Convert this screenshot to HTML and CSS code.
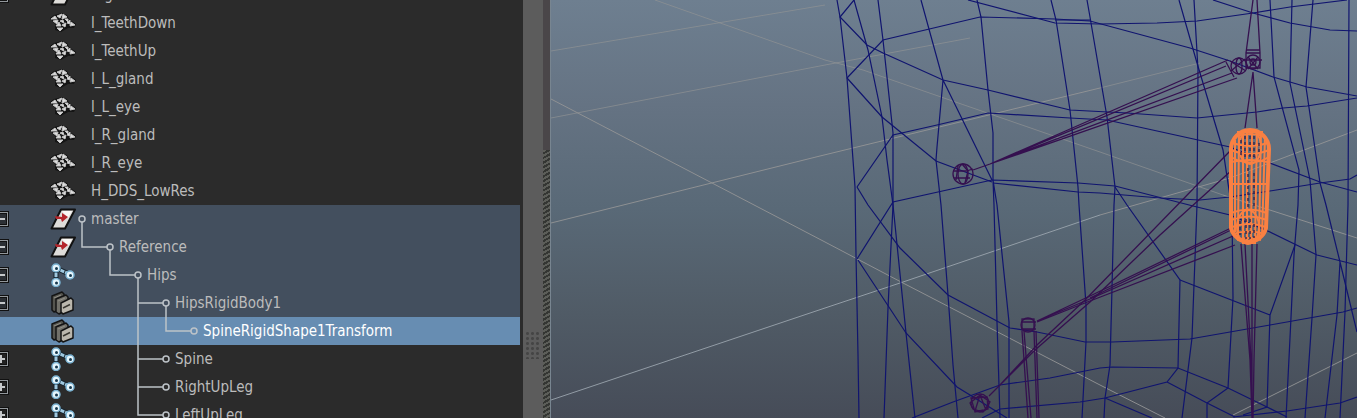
FILE: index.html
```html
<!DOCTYPE html>
<html lang="en">
<head>
<meta charset="utf-8">
<title>Outliner</title>
<link rel="stylesheet" href="styles.css">
</head>
<body>
<svg class="defs" aria-hidden="true">
  <symbol id="mesh" viewBox="0 0 26 24">
    <path d="M0 7 4 4 12 2 17 4 19 8 26 13 24 17 18 17 11 21 5 19 5 13Z" fill="#151515"/>
    <path d="M1 8 5 5 7 8ZM7 5 12 3 10 7ZM13 3 17 6 12 8ZM3 10 8 9 7 13ZM10 10 13 9 14 12ZM15 8 18 8 18 11ZM6 15 9 11 11 15ZM12 14 16 12 15 16ZM17 12 20 9 20 13ZM21 11 25 14 20 15ZM7 17 13 17 10 20Z" fill="#dedede" stroke="#c4c4c4"/>
  </symbol>
  <symbol id="transform" viewBox="0 0 26 24">
    <path d="M11 2.500H25L15 21.500H1.500Z" fill="#dedcd9" stroke="#111" stroke-width="2" stroke-linejoin="round"/>
    <path d="M12 4 22 4 18 11Z" fill="#faf8f6"/>
    <path d="M5 9 12 10 12 6 18 10 12 15 11 12 6 12Z" fill="#b5262c"/>
  </symbol>
  <symbol id="joint" viewBox="0 0 26 24">
    <path d="M6 5 19 11M6 5V19" stroke="#16242e" stroke-width="5"/>
    <path d="M6 5 19 11M6 5V19" stroke="#9fc8df" stroke-width="3" stroke-dasharray="4 1"/>
    <g fill="#e6f6fd" stroke="#79b2d2" stroke-width="1.500"><circle cx="6" cy="5" r="4"/><circle cx="20" cy="12" r="4"/><circle cx="6" cy="19.500" r="4"/></g>
    <g fill="#17374c"><circle cx="6.500" cy="5.500" r="1.500"/><circle cx="20.500" cy="12.500" r="1.500"/><circle cx="6.500" cy="20" r="1.500"/></g>
  </symbol>
  <symbol id="rigid" viewBox="0 0 26 24">
    <g stroke="#141414" stroke-width="1.500" stroke-linejoin="round">
      <path d="M2 5 12 1 14 3V17L4 21 2 19Z" fill="#55554f"/>
      <path d="M6 8 16 4 18 6V18L9 23 6 21Z" fill="#72716a"/>
      <path d="M11 12 13 11 21 7 23 9V19L13 23 11 21Z" fill="#bbb7ad"/>
    </g>
    <path d="M13 17 20 13.500" stroke="#38362f" stroke-width="1.500"/><path d="M4 7 11 4M8 10 15 7" stroke="#918f87"/>
  </symbol>
</svg>
<main class="app">
  <ul class="outliner">
    <li class="row"><button class="toggle" aria-label="Collapse"></button><svg class="icon"><use href="#transform"/></svg><span class="branch"></span><span>Rig</span></li>
    <li class="row"><svg class="icon"><use href="#mesh"/></svg><span class="branch"></span><span>l_TeethDown</span></li>
    <li class="row"><svg class="icon"><use href="#mesh"/></svg><span class="branch"></span><span>l_TeethUp</span></li>
    <li class="row"><svg class="icon"><use href="#mesh"/></svg><span class="branch"></span><span>l_L_gland</span></li>
    <li class="row"><svg class="icon"><use href="#mesh"/></svg><span class="branch"></span><span>l_L_eye</span></li>
    <li class="row"><svg class="icon"><use href="#mesh"/></svg><span class="branch"></span><span>l_R_gland</span></li>
    <li class="row"><svg class="icon"><use href="#mesh"/></svg><span class="branch"></span><span>l_R_eye</span></li>
    <li class="row"><svg class="icon"><use href="#mesh"/></svg><span class="branch"></span><span>H_DDS_LowRes</span></li>
    <li class="row parent"><button class="toggle" aria-label="Collapse master"></button><svg class="icon"><use href="#transform"/></svg><svg class="branch"><circle cx="6" cy="14" r="3"/><path d="M6 17V28"/></svg><span>master</span></li>
    <li class="row parent"><button class="toggle" aria-label="Collapse Reference"></button><svg class="icon"><use href="#transform"/></svg><svg class="branch d1"><path d="M6 0V14H31M34 17V28"/><circle cx="34" cy="14" r="3"/></svg><span>Reference</span></li>
    <li class="row parent"><button class="toggle" aria-label="Collapse Hips"></button><svg class="icon"><use href="#joint"/></svg><svg class="branch d2"><path d="M34 0V14H59M62 17V28"/><circle cx="62" cy="14" r="3"/></svg><span>Hips</span></li>
    <li class="row parent"><button class="toggle" aria-label="Collapse HipsRigidBody1"></button><svg class="icon"><use href="#rigid"/></svg><svg class="branch d3"><path d="M62 0V28M62 14H87M90 17V28"/><circle cx="90" cy="14" r="3"/></svg><span>HipsRigidBody1</span></li>
    <li class="row selected"><svg class="icon"><use href="#rigid"/></svg><svg class="branch d4"><path d="M62 0V28M90 0V14H115"/><circle cx="118" cy="14" r="3"/></svg><span>SpineRigidShape1Transform</span></li>
    <li class="row"><button class="toggle closed" aria-label="Expand Spine"></button><svg class="icon"><use href="#joint"/></svg><svg class="branch d3"><path d="M62 0V28M62 14H87"/><circle cx="90" cy="14" r="3"/></svg><span>Spine</span></li>
    <li class="row"><button class="toggle closed" aria-label="Expand RightUpLeg"></button><svg class="icon"><use href="#joint"/></svg><svg class="branch d3"><path d="M62 0V28M62 14H87"/><circle cx="90" cy="14" r="3"/></svg><span>RightUpLeg</span></li>
    <li class="row"><button class="toggle closed" aria-label="Expand LeftUpLeg"></button><svg class="icon"><use href="#joint"/></svg><svg class="branch d3"><path d="M62 0V14H87"/><circle cx="90" cy="14" r="3"/></svg><span>LeftUpLeg</span></li>
  </ul>
  <div class="gutter"><div class="grip"></div></div>
  <div class="edge"></div>
  <section class="viewport" aria-label="Perspective view">
    <svg class="scene" viewBox="551 0 806 418" preserveAspectRatio="xMinYMin slice">
      <g class="grid">
        <path class="far" d="M551 51 825 5M551 118 825 65 970 38M655 0 825 60 863 70 1100 152 1223 195M1100 88 1200 63"/>
        <path d="M551 223 820 156 1100 88M551 99 712 183 825 242 903 283 1100 385 1165 418M1223 195 1357 238M1100 215 1230 178 1357 130M1233 415 1357 353"/>
        <path class="near" d="M551 400 825 308 903 282 1100 215"/>
      </g>
      <g class="wire">
        <path d="M837 0 840 17 847 78 855 187 856 255 858 355 859 418"/>
        <path d="M854 0 868 50 882 117 887 160 893 205 906 333 915 418"/>
        <path d="M878 0 883 40 893 133 893 205 888 308 884 418"/>
        <path d="M921 0 943 80 937 147 936 160 941 205 948 295 953 365 958 418M943 80 992 180"/>
        <path d="M977 0 981 17 988 90 993 133 993 180 994 205 997 322 1000 418M993 180 997 205 1009 322 1009 418"/>
        <path d="M1051 0 1056 20 1070 110 1078 187 1079 205 1086 305 1086 342 1082 418"/>
        <path d="M1087 0 1090 17 1107 117 1115 187 1114 205 1112 288 1110 365 1105 398 1104 418"/>
        <path d="M1179 0 1197 63 1223 150 1232 210 1233 298 1228 388"/>
        <path d="M1194 0 1198 70 1197 205 1192 338 1182 418"/>
        <path d="M1270 0 1274 77 1299 170 1298 205 1294 255 1290 338 1286 418"/>
        <path d="M1292 0 1290 83 1310 180 1312 205 1316 255 1312 318 1305 418"/>
        <path d="M1313 0 1306 87 1320 183 1326 205 1340 262 1357 332M1340 262 1337 315 1325 418"/>
        <path d="M1349 0 1348 205 1345 312 1340 418"/>
        <path d="M854 0 840 17 867 45 883 53 943 80 988 90 1070 110 1127 113 1197 118 1257 112 1283 108 1307 106 1357 98"/>
        <path d="M847 78 883 40 980 17 1055 19 1090 21 1190 48 1230 61 1273 77 1307 87 1357 96"/>
        <path d="M968 0 1055 23 1100 24 1157 23 1197 21 1253 13 1290 7 1347 0M1055 20H1090"/>
        <path d="M1213 0 1253 13 1290 23 1330 30 1357 31"/>
        <path d="M847 78 882 117 936 161 992 182"/>
        <path d="M857 187 893 135 937 125 988 113 1070 118 1107 120 1230 147 1270 163 1320 182 1357 192"/>
        <path d="M857 187 868 205 900 248 948 295 1010 328 1037 332 1085 342 1112 342 1190 339 1270 325 1343 312 1357 308"/>
        <path d="M857 259 893 202 992 180 1078 183 1115 186 1197 207 1230 215 1270 232 1317 255 1357 265"/>
        <path d="M993 183 1078 192 1100 193 1160 198 1200 200 1230 197 1270 191 1320 183 1350 179 1357 175"/>
        <path d="M858 260 906 333 957 387 970 395 1007 418"/>
        <path d="M912 418 953 402 1000 385 1050 378 1100 368 1112 367 1178 368 1228 388 1267 407 1287 417"/>
        <path d="M982 418 1000 409 1080 402 1105 398 1167 382 1178 368 1180 280 1127 205 1115 187M1105 398 1152 418M1167 382 1207 403 1235 417M1228 388 1207 403V418"/>
        <path d="M1180 280 1270 315 1295 245M1270 315 1267 407 1243 415M1233 417 1287 411 1340 403 1357 397"/>
      </g>
      <g class="bone">
        <path d="M973 170 990 164 1228 60M990 164 1226 66M990 164 1232 73M990 164 1237 78M1226 62 1234 77"/>
        <path d="M1253 0 1246 53M1257 0 1260 53M1246 50H1260M1246 53H1260V68H1246ZM1245 60H1262M1248 57 1258 69M1258 57 1248 69M1253 72 1245 128M1253 72 1257 128"/>
        <circle cx="1253" cy="62" r="7"/><circle cx="1253" cy="62" r="3"/>
        <circle cx="1239" cy="66" r="8"/><ellipse cx="1239" cy="66" rx="3" ry="8"/><path d="M1230 61 1246 71M1231 71 1245 59"/>
        <circle cx="963" cy="174" r="10"/><ellipse cx="963" cy="174" rx="5" ry="10"/><path d="M953 171 966 171 973 169M954 178H970M962 164 968 171 965 183M958 166 956 180"/>
        <path d="M1230 151 1085 300 1037 345 1000 385 989 396M1232 170 1160 235 1090 302 1035 350 1000 385"/>
        <path d="M1231 228 1090 296 1037 321M1233 236 1090 299 1037 321M1235 245 1090 301 1037 322M1231 230 1090 298"/>
        <circle cx="1028" cy="325" r="7"/><rect x="1022" y="319" width="12" height="11"/><path d="M1021 322H1036M1021 329H1036"/>
        <path d="M1022 331 1028 418M1024 331 1031 418M1034 331 1037 418M1036 331 1039 418"/>
        <circle cx="980" cy="403" r="9"/><path d="M970 403 980 395 990 402 983 412 973 409ZM971 398 987 397 988 409 975 412ZM980 395 975 411M980 395 986 410"/>
        <path d="M1241 244 1250 360 1252 418M1245 244 1251 360 1252 418M1252 244V418M1257 244 1254 360 1253 418"/>
      </g>
      <g class="capsule">
        <path class="shell" d="M1231 149A19 19 0 0 1 1269 149L1266 228A18 18 0 0 1 1231 228Z"/>
        <path d="M1235 140V232M1239 134 1238 238M1243 131V241M1247 129V243M1252 129 1251 244M1257 130 1255 243M1261 132 1259 240M1265 137 1262 235"/>
        <path class="rings" d="M1231 157Q1250 168 1269 157M1231 150Q1250 158 1269 150M1232 143Q1250 149 1268 143M1234 137Q1250 131 1266 137M1237 132H1263M1231 162Q1250 158 1268 162M1231 184H1267M1231 213Q1249 206 1267 213M1231 220Q1249 213 1267 220M1232 227Q1249 221 1266 227M1233 234Q1249 229 1265 234M1237 240Q1249 236 1261 240M1242 243H1256"/>
        <ellipse cx="1250" cy="147" rx="11" ry="17"/><ellipse cx="1248" cy="227" rx="11" ry="17"/>
        <path class="pits" d="M1241 140V156M1245 136V160M1250 136V160M1254 136V157M1259 143V152M1248 168V207M1254 173V207M1240 221V235M1246 219V239M1250 219V239M1254 224V238"/>
      </g>
    </svg>
  </section>
</main>
</body>
</html>
```
FILE: styles.css
```css
* { box-sizing: border-box; }

body {
  margin: 0;
  background: #2b2b2b;
  color: #bcbcbc;
  font: 15px/28px "DejaVu Sans Condensed", "Noto Sans", sans-serif;
}

.defs {
  position: absolute;
  width: 0;
  height: 0;
}

.app {
  display: grid;
  grid-template-columns: minmax(240px, 523px) 20px 8px minmax(0, 1fr);
  height: 100vh;
  overflow: hidden;
}

.outliner {
  min-height: 0;
  margin: -19px 0 0;
  padding: 0 3px 0 0;
  list-style: none;
  background: #2b2b2b;
}

.row {
  display: grid;
  grid-template-columns: 50px 26px auto 1fr;
  align-items: center;
  height: 28px;
  white-space: nowrap;
}

.row > .icon { grid-column: 2; }
.parent { background: #434f5e; }
.selected { background: #678db2; color: #fff; }

.toggle {
  grid-column: 1;
  width: 16px;
  height: 16px;
  margin: 0 0 0 -7px;
  padding: 0;
  border: 1px solid #111;
  box-shadow: inset 0 0 0 1px #92979b, inset 0 0 0 2px #111;
  background: linear-gradient(#c5c8ca, #c5c8ca) center / 8px 2px no-repeat #2b2f34;
}

.closed {
  background:
    linear-gradient(#c5c8ca, #c5c8ca) center / 8px 2px no-repeat,
    linear-gradient(#c5c8ca, #c5c8ca) center / 2px 8px no-repeat #222;
}

.icon {
  display: block;
  width: 26px;
  height: 24px;
}

.branch {
  display: block;
  width: 15px;
  height: 28px;
  fill: none;
  stroke: #bdc3c8;
  stroke-width: 1.5px;
}

.d1 { width: 43px; }
.d2 { width: 71px; }
.d3 { width: 99px; }
.d4 { width: 127px; }

.gutter {
  display: flex;
  justify-content: center;
  padding-top: 331px;
  background: #5c5c5c;
}

.grip {
  width: 16px;
  height: 28px;
  background: radial-gradient(circle, #454545 1px, transparent 2px) 0 0 / 5px 5px;
}

.edge {
  border-right: 1px solid #788590;
  background:
    linear-gradient(#4a4649, #4a4649) 0 0 / 100% 150px no-repeat,
    repeating-linear-gradient(150deg, #343633 0 2px, #5c5e59 2px 4px);
}

.viewport {
  min-width: 0;
  min-height: 0;
  overflow: hidden;
  background: linear-gradient(#6e7f90, #657383 25%, #596977 50%, #505b66 75%, #464c58);
}

.scene {
  display: block;
  width: 100%;
  height: 100%;
  fill: none;
}

.grid { stroke: #949596; opacity: 0.9; }
.far { opacity: 0.7; }
.near { stroke: #9ba5ae; }
.wire { stroke: #10146f; stroke-width: 1.2px; }
.bone { stroke: #35104f; stroke-width: 1.3px; }
.capsule { stroke: #fa8042; stroke-width: 2px; }
.shell { stroke-width: 4px; }
.rings { stroke-width: 2px; }
.pits { stroke: #3d294b; stroke-width: 1.5px; stroke-dasharray: 3px 3px; }
```
